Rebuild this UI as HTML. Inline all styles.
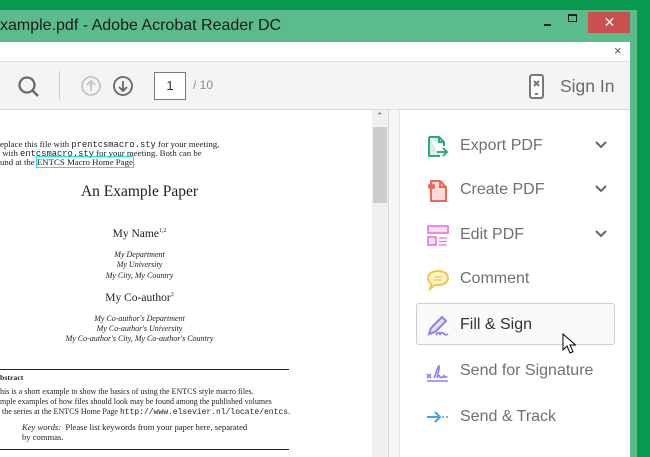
<!DOCTYPE html>
<html><head><meta charset="utf-8"><style>
*{margin:0;padding:0;box-sizing:border-box}
body{width:650px;height:457px;overflow:hidden;position:relative;background:#079a4e;font-family:"Liberation Sans",sans-serif}
.a{position:absolute}
.pdf{font-family:"Liberation Serif",serif;color:#222;white-space:nowrap}
.row{position:absolute;left:400px;width:230px;height:40px;display:flex;align-items:center;font-size:16px;color:#707070}
.row .t{position:absolute;left:60px}
.chev{position:absolute;left:194px;top:12px}
</style></head><body>
<div class="a" style="left:0;top:10px;width:637px;height:447px;background:#5cbb8a"></div>
<div class="a" style="left:0;top:17px;font-size:16px;color:#1c1c1c">xample.pdf - Adobe Acrobat Reader DC</div>
<div class="a" style="left:544px;top:24px;width:7px;height:2px;background:#222"></div>
<div class="a" style="left:568px;top:14px;width:9px;height:8px;border:1.5px solid #222;border-top-width:2px"></div>
<div class="a" style="left:588px;top:12px;width:43px;height:21px;background:#c9504f;color:#fff;font-size:14px;text-align:center;line-height:20px">✕</div>
<div class="a" style="left:0;top:42px;width:630px;height:20px;background:#fff;border-bottom:1px solid #ddd"></div>
<div class="a" style="left:614px;top:43px;font-size:13px;color:#555">×</div>
<div class="a" style="left:0;top:62px;width:630px;height:48px;background:#f4f4f4;border-bottom:1px solid #d8d8d8"></div>
<svg class="a" style="left:16px;top:74px" width="26" height="26"><circle cx="11" cy="11" r="7.5" fill="none" stroke="#6b6b6b" stroke-width="2.3"/><line x1="16.5" y1="16.5" x2="22" y2="22" stroke="#6b6b6b" stroke-width="2.6"/></svg>
<div class="a" style="left:59px;top:71px;width:1px;height:28px;background:#ccc"></div>
<svg class="a" style="left:80px;top:75px" width="22" height="22"><circle cx="11" cy="11" r="9" fill="none" stroke="#c4c4c4" stroke-width="1.8"/><path d="M11 16V6M7 10l4-4 4 4" fill="none" stroke="#c4c4c4" stroke-width="1.8"/></svg>
<svg class="a" style="left:112px;top:75px" width="22" height="22"><circle cx="11" cy="11" r="9" fill="none" stroke="#666" stroke-width="1.8"/><path d="M11 6v10M7 12l4 4 4-4" fill="none" stroke="#666" stroke-width="1.8"/></svg>
<div class="a" style="left:154px;top:72px;width:32px;height:28px;border:1px solid #777;background:#fff;font-size:13px;color:#402050;text-align:center;line-height:26px">1</div>
<div class="a" style="left:193px;top:78px;font-size:12px;color:#8a8a9a">/ 10</div>
<svg class="a" style="left:528px;top:74px" width="18" height="26"><rect x="2" y="1" width="13" height="23" rx="2" fill="#fff" stroke="#777" stroke-width="2"/><path d="M6 7l5 5M11 7l-5 5" stroke="#777" stroke-width="2"/><line x1="7" y1="20" x2="10" y2="20" stroke="#777" stroke-width="2"/></svg>
<div class="a" style="left:560px;top:76px;font-size:17.5px;color:#6a6a6a">Sign In</div>
<div class="a" style="left:0;top:110px;width:372px;height:347px;background:#fff"></div>
<div class="a" style="left:372px;top:110px;width:16px;height:347px;background:#f0f0f0"></div>
<div class="a" style="left:373px;top:127px;width:14px;height:76px;background:#cdcdcd"></div>
<div class="a" style="left:376px;top:111px;font-size:9px;color:#555">⌃</div>
<div class="a" style="left:388px;top:110px;width:1px;height:347px;background:#d8d8d8"></div>
<div class="a" style="left:389px;top:110px;width:10px;height:347px;background:#f7f7f7"></div>
<div class="a" style="left:399px;top:110px;width:231px;height:347px;background:#fff;border-left:1px solid #e4e4e4"></div>
<div class="pdf a" style="left:0;top:140px;font-size:8.8px;line-height:8px">eplace this file with <span style="font-family:'Liberation Mono'">prentcsmacro.sty</span> for your meeting,<br>&nbsp;with <span style="font-family:'Liberation Mono'">entcsmacro.sty</span> for your meeting. Both can be<br>und at the <span style="outline:1px solid #1de3f0">ENTCS Macro Home Page</span>.</div>
<div class="pdf a" style="left:0;width:279px;text-align:center;top:183px;font-size:15.5px">An Example Paper</div>
<div class="pdf a" style="left:0;width:279px;text-align:center;top:228px;font-size:11.5px">My Name<sup style="font-size:6px">1,2</sup></div>
<div class="pdf a" style="left:0;width:279px;text-align:center;top:250px;font-size:8px;line-height:10.3px;font-style:italic">My Department<br>My University<br>My City, My Country</div>
<div class="pdf a" style="left:0;width:279px;text-align:center;top:292px;font-size:11.5px">My Co-author<sup style="font-size:6px">3</sup></div>
<div class="pdf a" style="left:0;width:279px;text-align:center;top:314px;font-size:8px;line-height:10.2px;font-style:italic">My Co-author's Department<br>My Co-author's University<br>My Co-author's City, My Co-author's Country</div>
<div class="a" style="left:0;top:369px;width:289px;height:1px;background:#222"></div>
<div class="pdf a" style="left:0;top:373px;font-size:7.8px;font-weight:bold">bstract</div>
<div class="pdf a" style="left:0;top:387px;font-size:8px;line-height:10px">his is a short example to show the basics of using the ENTCS style macro files.<br>mple examples of how files should look may be found among the published volumes<br>&nbsp;the series at the ENTCS Home Page <span style="font-family:'Liberation Mono'">http://www.elsevier.nl/locate/entcs</span>.</div>
<div class="pdf a" style="left:22px;top:422px;font-size:8.6px;line-height:10px"><i>Key words:</i>&nbsp; Please list keywords from your paper here, separated<br>by commas.</div>
<div class="a" style="left:0;top:449px;width:289px;height:1px;background:#222"></div>
<div class="a" style="left:630px;top:10px;width:7px;height:447px;background:#5cbb8a"></div>
<div class="row" style="top:126px"><svg class="a" style="left:27px;top:10px" width="22" height="22"><path d="M2 1h10l5 5v4M2 1v19h11" fill="#d4efe6" stroke="#2fa88a" stroke-width="2"/><path d="M12 1v5h5" fill="none" stroke="#2fa88a" stroke-width="2"/><path d="M10 16h10M16 12l4 4-4 4" fill="none" stroke="#2fa88a" stroke-width="2"/></svg><span class="t">Export PDF</span><svg class="chev" width="14" height="14"><path d="M2 4l5 5 5-5" fill="none" stroke="#666" stroke-width="2"/></svg></div>
<div class="row" style="top:170px"><svg class="a" style="left:27px;top:10px" width="22" height="22"><path d="M4 1h9l6 6v14H4z" fill="#fadad6" stroke="#e8685a" stroke-width="2"/><path d="M13 1v6h6" fill="none" stroke="#e8685a" stroke-width="2"/><rect x="1" y="4" width="7" height="5" rx="2" fill="#e8685a"/></svg><span class="t">Create PDF</span><svg class="chev" width="14" height="14"><path d="M2 4l5 5 5-5" fill="none" stroke="#666" stroke-width="2"/></svg></div>
<div class="row" style="top:215px"><svg class="a" style="left:27px;top:10px" width="22" height="22"><rect x="1" y="1" width="20" height="7" fill="#fbe0f5" stroke="#e673d8" stroke-width="1.6"/><rect x="1" y="12" width="8" height="8" fill="#fbe0f5" stroke="#e673d8" stroke-width="1.6"/><path d="M12 13h8M12 16.5h8M12 20h8" stroke="#e673d8" stroke-width="1.3"/></svg><span class="t">Edit PDF</span><svg class="chev" width="14" height="14"><path d="M2 4l5 5 5-5" fill="none" stroke="#666" stroke-width="2"/></svg></div>
<div class="row" style="top:259px"><svg class="a" style="left:26px;top:9px" width="24" height="24"><path d="M12 3c6 0 10 3 10 7s-4 7-10 7c-1 0-2 0-3-.3L4 21l1.5-5C3 14.5 2 12.5 2 10c0-4 4-7 10-7z" fill="#fff3c8" stroke="#f5c44a" stroke-width="2"/><path d="M8 9h8M8 12h8" stroke="#f5c44a" stroke-width="1.3"/></svg><span class="t">Comment</span></div>
<div class="a" style="left:416px;top:303px;width:199px;height:42px;border:1px solid #cfcfcf;border-radius:3px;background:#fafafa"></div>
<div class="row" style="top:305px;color:#333"><svg class="a" style="left:26px;top:9px" width="26" height="24"><path d="M3 20l2-6L16 3l4 4L9 18z" fill="#e6e3fb" stroke="#8c80ee" stroke-width="2"/><path d="M10 21c2-3 4-3 4 0 1-3 3-3 4-1 1 1 3 1 4 0" fill="none" stroke="#8c80ee" stroke-width="1.8"/></svg><span class="t">Fill &amp; Sign</span></div>
<div class="row" style="top:351px"><svg class="a" style="left:26px;top:9px" width="24" height="24"><path d="M1 14l4 4M5 14l-4 4" stroke="#8c80ee" stroke-width="1.6"/><path d="M8 18c2-4 3-10 5-12 1 3-2 10-2 12 1-3 3-3 3-1 1 1 3 1 4-2 0 3 2 3 3 1" fill="none" stroke="#8c80ee" stroke-width="1.6"/><line x1="1" y1="21" x2="22" y2="21" stroke="#8c80ee" stroke-width="1.6"/></svg><span class="t">Send for Signature</span></div>
<div class="row" style="top:397px"><svg class="a" style="left:26px;top:10px" width="24" height="20"><path d="M1 10h13M9 5l5 5-5 5" fill="none" stroke="#4aa3df" stroke-width="2"/><path d="M16 10h2M20 10h2" stroke="#4aa3df" stroke-width="1.5"/></svg><span class="t">Send &amp; Track</span></div>
<svg class="a" style="left:562px;top:333px" width="14" height="22"><path d="M1 1v16l4-4 3 7 3-1.3-3-6.7h5.5z" fill="#fff" stroke="#000" stroke-width="1"/></svg>
</body></html>
